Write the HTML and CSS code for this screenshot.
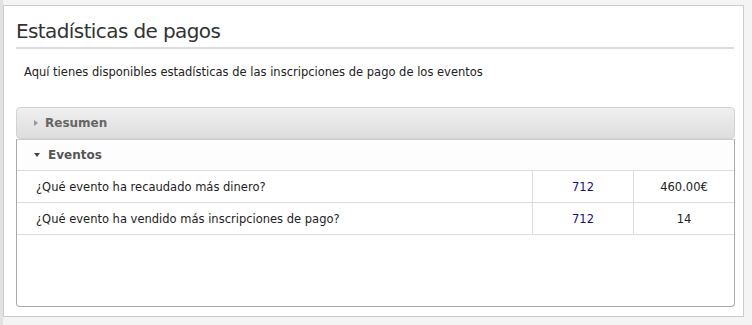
FILE: index.html
```html
<!DOCTYPE html>
<html lang="es">
<head>
    <meta charset="UTF-8">
    <title>Estadísticas de pagos</title>
    <link rel="stylesheet" href="styles.css">
</head>
<body>
    <div class="page">
        <div class="panel">
            <h1 class="title">Estadísticas de pagos</h1>
            <p class="intro">Aquí tienes disponibles estadísticas de las inscripciones de pago de los eventos</p>

            <div class="accordion">
                <div class="acc-header closed">
                    <span class="arrow-right"></span>Resumen
                </div>
                <div class="acc-section">
                    <div class="acc-header open">
                        <span class="arrow-down"></span>Eventos
                    </div>
                    <table class="stats">
                        <tr>
                            <td class="question">¿Qué evento ha recaudado más dinero?</td>
                            <td class="event"><a href="#">712</a></td>
                            <td class="value">460.00€</td>
                        </tr>
                        <tr>
                            <td class="question">¿Qué evento ha vendido más inscripciones de pago?</td>
                            <td class="event"><a href="#">712</a></td>
                            <td class="value">14</td>
                        </tr>
                    </table>
                </div>
            </div>
        </div>
    </div>
</body>
</html>
```

FILE: styles.css
```css
body {
    margin: 0;
    padding: 0;
    background-color: #f4f4f4;
    font-family: "DejaVu Sans", Verdana, sans-serif;
    color: #222;
}

.page {
    border-left: 3px solid #e2e2e2;
    height: 325px;
    box-sizing: border-box;
    padding-top: 5px;
}

.panel {
    background: #fff;
    border: 1px solid #cccccc;
    width: 741px;
    height: 312px;
    box-sizing: border-box;
    padding: 0 9px 0 12px;
}

.title {
    margin: 0;
    padding: 13px 0 4px 0;
    font-size: 20px;
    font-weight: normal;
    color: #333;
    border-bottom: 2px solid #dddddd;
    letter-spacing: -0.6px;
}

.intro {
    margin: 0;
    padding: 16px 0 0 8px;
    font-size: 11.5px;
    height: 42px;
}

.accordion {
    width: 719px;
}

.acc-header {
    height: 30px;
    display: flex;
    align-items: center;
    font-size: 12px;
    font-weight: bold;
    color: #555;
    padding-left: 17px;
}

.acc-header.closed {
    background: linear-gradient(#f0f0f0, #e6e6e6 50%, #dedede);
    border: 1px solid #d2d2d2;
    border-radius: 4px;
    color: #666;
}

.acc-header.open {
    height: 31px;
    background: #fdfdfd;
    border-bottom: 1px solid #dddddd;
    box-sizing: border-box;
}

.arrow-right {
    width: 0;
    height: 0;
    border-top: 3px solid transparent;
    border-bottom: 3px solid transparent;
    border-left: 4px solid #999;
    margin-right: 7px;
}

.arrow-down {
    width: 0;
    height: 0;
    border-left: 3px solid transparent;
    border-right: 3px solid transparent;
    border-top: 4px solid #444;
    margin-right: 8px;
}

.acc-section {
    border: 1px solid #aaaaaa;
    border-top-color: #cccccc;
    border-radius: 0 0 4px 4px;
    height: 168px;
    box-sizing: border-box;
}

.stats {
    width: 100%;
    border-collapse: collapse;
    font-size: 11.5px;
}

.stats td {
    height: 31px;
    border-bottom: 1px solid #dddddd;
    padding: 0;
}

.stats .question {
    padding-left: 19px;
}

.stats .event,
.stats .value {
    width: 100px;
    text-align: center;
    border-left: 1px solid #dddddd;
}

.stats a {
    color: #1a1070;
    text-decoration: none;
}
```
